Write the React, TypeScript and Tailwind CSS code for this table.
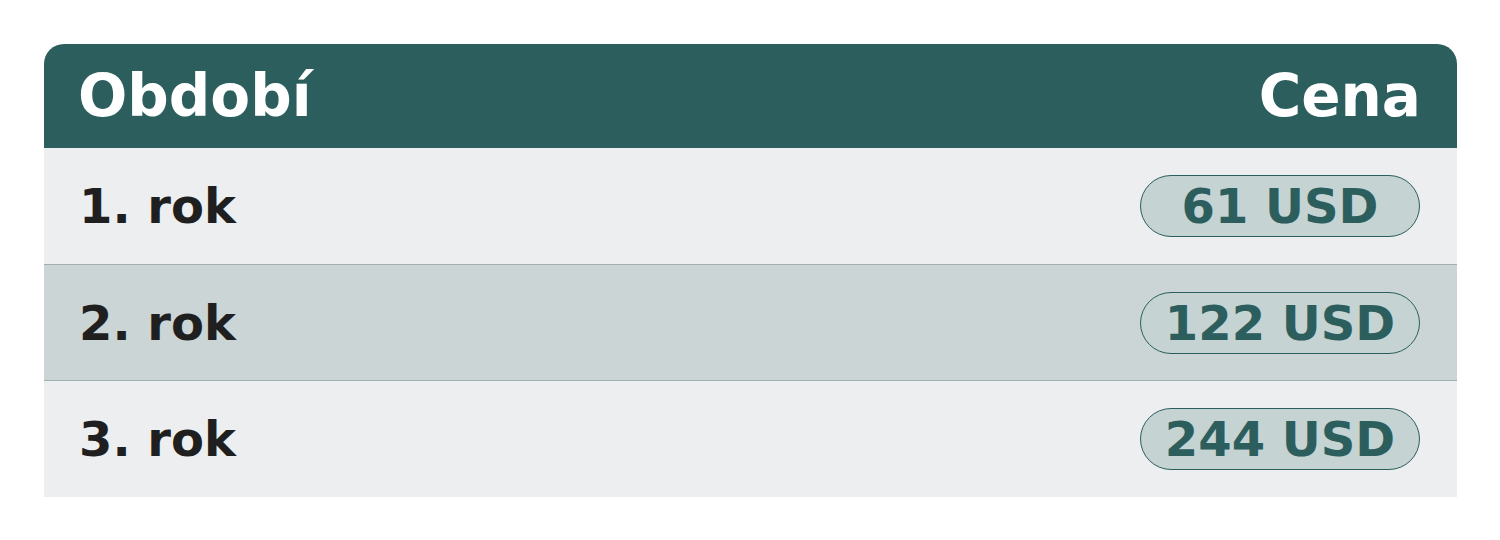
import React from 'react';

const rows = [
  { label: '1. rok', price: '61 USD' },
  { label: '2. rok', price: '122 USD' },
  { label: '3. rok', price: '244 USD' },
];

const App: React.FC = () => {
  return (
    <div className="min-h-[540px] bg-white pt-[44px] pl-[44px]" style={{ fontFamily: '"DejaVu Sans", sans-serif' }}>
      <div className="w-[1413px]">
        {/* Header */}
        <div className="flex items-center justify-between h-[104px] pl-[34px] pr-[36px] bg-[#2d5e5e] rounded-t-[20px] text-white font-bold text-[58px] leading-none">
          <span>Období</span>
          <span>Cena</span>
        </div>

        {rows.map((r, i) => (
          <div
            key={r.label}
            className={`flex items-center justify-between h-[116px] pl-[35px] pr-[37px] ${i % 2 === 1 ? 'bg-[#cbd5d6]' : 'bg-[#eceef0]'} ${i > 0 ? 'border-t border-[#9fb0af]' : ''} ${i === 2 ? 'h-[117px]' : ''}`}
          >
            <span className="text-[48px] font-bold leading-none text-[#1f1f1f]">{r.label}</span>
            <span className="flex items-center justify-center w-[280px] h-[62px] rounded-full border border-[#2d5e5e] bg-[#c5d3d3] text-[48px] font-bold leading-none text-[#2d5e5e]">
              {r.price}
            </span>
          </div>
        ))}
      </div>
    </div>
  );
};

export default App;
